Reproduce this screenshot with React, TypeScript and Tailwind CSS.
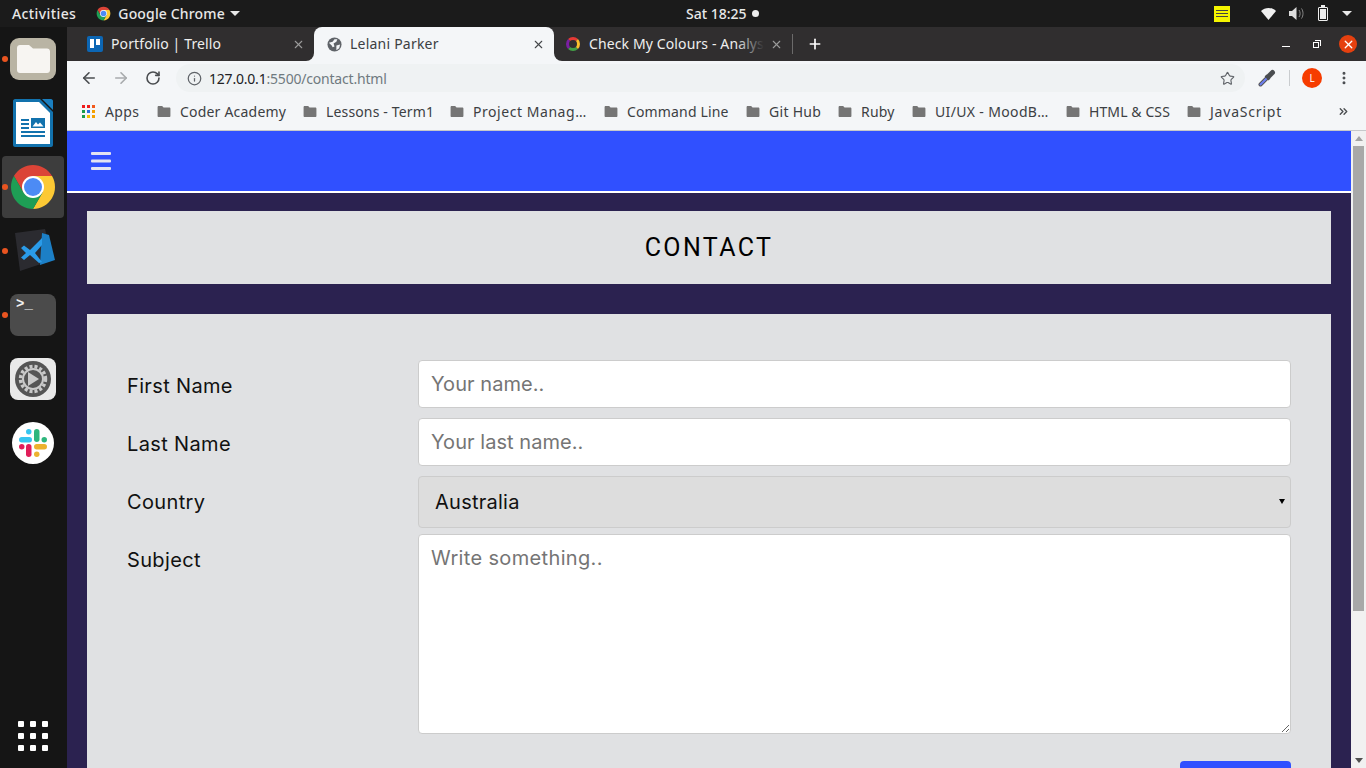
import { ArrowLeft, ArrowRight, Info, RotateCw, Star, Plus, X, MoreVertical, ChevronsRight } from 'lucide-react'

const bookmarks = [
  { label: 'Coder Academy', cls: 'w-[146px] tracking-[0.2px]' },
  { label: 'Lessons - Term1', cls: 'w-[147px] tracking-[0.15px]' },
  { label: 'Project Manag…', cls: 'w-[154px] tracking-[0.55px]' },
  { label: 'Command Line', cls: 'w-[142px] tracking-[0.15px]' },
  { label: 'Git Hub', cls: 'w-[92px] tracking-[0.3px]' },
  { label: 'Ruby', cls: 'w-[74px] tracking-[0.2px]' },
  { label: 'UI/UX - MoodB…', cls: 'w-[154px] tracking-[0.35px]' },
  { label: 'HTML & CSS', cls: 'w-[121px] tracking-[0.1px]' },
  { label: 'JavaScript', cls: 'w-[120px] tracking-[0.8px]' },
]

function ChromeLogo({ size }: { size: number }) {
  return (
    <svg width={size} height={size} viewBox="0 0 48 48">
      <path d="M24 13H43.05A22 22 0 0 0 4.95 13L14.47 29.5Z" fill="#db4437" />
      <path d="M43.05 13A22 22 0 0 1 24 46L33.53 29.5L24 13Z" fill="#fcc934" />
      <path d="M24 46A22 22 0 0 1 4.95 13L14.47 29.5L33.53 29.5Z" fill="#1e9e55" />
      <circle cx="24" cy="24" r="11" fill="#fff" />
      <circle cx="24" cy="24" r="9" fill="#4c8bf5" />
    </svg>
  )
}

function Folder() {
  return (
    <svg width="14" height="11" viewBox="0 0 14 12" className="shrink-0">
      <path d="M0 1.2C0 .5.5 0 1.2 0H5l1.5 1.6h6.3c.7 0 1.2.5 1.2 1.2v8c0 .7-.5 1.2-1.2 1.2H1.2C.5 12 0 11.500 0 10.800Z" fill="#757575" />
    </svg>
  )
}

function DockItem({ children, running, active }: { children: React.ReactNode; running?: boolean; active?: boolean }) {
  return (
    <div className="relative h-16 flex items-center justify-center pr-[1px]">
      {active && <div className="absolute left-[2px] top-[1px] w-[62px] h-[62px] rounded-[4px] bg-[#3d3d3d]" />}
      {running && <div className="absolute left-[2px] top-[29px] w-[6px] h-[6px] rounded-full bg-[#e95420]" />}
      <div className="relative">{children}</div>
    </div>
  )
}

function Dock() {
  return (
    <aside className="w-[67px] shrink-0 bg-[#151515] flex flex-col">
      <DockItem running>
        <div className="w-[46px] h-[42px] rounded-[9px] bg-[#b9b4a4] flex items-center justify-center">
          <svg width="33" height="28" viewBox="0 0 33 28">
            <path d="M0 3C0 1.300 1.300 0 3 0H12L16 3.500H30C31.700 3.500 33 4.800 33 6.500V25C33 26.700 31.700 28 30 28H3C1.300 28 0 26.700 0 25Z" fill="#f7f5f2" />
          </svg>
        </div>
      </DockItem>
      <DockItem>
        <svg width="40" height="48" viewBox="0 0 40 48">
          <path d="M2 0H27L40 13V46C40 47 39 48 38 48H2C1 48 0 47 0 46V2C0 1 1 0 2 0Z" fill="#1272ad" />
          <path d="M3 3H26L37 14V45H3Z" fill="#fff" />
          <path d="M29 0H38C39 0 40 1 40 2V11Z" fill="#1a7fc0" />
          <path d="M8 20H16V22H8ZM8 24H16V26H8ZM8 28H16V30H8ZM8 32H32V34H8ZM8 36H32V38H8Z" fill="#1272ad" />
          <path d="M18 19H32V29H18Z" fill="#1272ad" />
          <path d="M19.500 27.500L23 23L25 25.500L27 23.500L30.500 27.500Z" fill="#fff" />
        </svg>
      </DockItem>
      <DockItem running active>
        <ChromeLogo size={48} />
      </DockItem>
      <DockItem running>
        <svg width="44" height="44" viewBox="0 0 44 44">
          <path d="M4 4L34 0L42 31L9 42Z" fill="#2b2b30" />
          <path d="M31 4L38 6L44 31L29 36Z" fill="#1c7fc6" />
          <path d="M10 19L13 16.500L19 21L31 9V16L24 24L31 33L28 34L19 26L13 31L10 28.500L15 24Z" fill="#2a9be8" />
        </svg>
      </DockItem>
      <DockItem running>
        <div className="w-[46px] h-[42px] rounded-[8px] bg-[#4b4b4b] px-[6px] py-[3px] text-[#f2f2f2] text-[14px] leading-[15px] font-bold font-['Liberation_Mono',monospace]">
          &gt;_
        </div>
      </DockItem>
      <DockItem>
        <div className="w-[46px] h-[42px] rounded-[8px] bg-[#e9e9e9] flex items-center justify-center">
          <svg width="36" height="36" viewBox="0 0 36 36">
            <circle cx="18" cy="18" r="18" fill="#555" />
            <circle cx="18" cy="18" r="12.500" fill="none" stroke="#c9c9c9" strokeWidth="3.500" strokeDasharray="3 2" />
            <circle cx="18" cy="18" r="10" fill="none" stroke="#c9c9c9" strokeWidth="2" />
            <circle cx="18" cy="18" r="7.500" fill="#555" />
            <path d="M13 11L24 18L13 25Z" fill="#c9c9c9" />
          </svg>
        </div>
      </DockItem>
      <DockItem>
        <div className="w-[42px] h-[42px] rounded-full bg-white flex items-center justify-center">
          <svg width="28" height="28" viewBox="0 0 28 28">
            <rect x="0" y="8" width="13" height="5.500" rx="2.750" fill="#36c5f0" />
            <rect x="7" y="0" width="5.500" height="5.500" rx="2.750" fill="#36c5f0" />
            <rect x="15" y="0" width="5.500" height="13" rx="2.750" fill="#2eb67d" />
            <rect x="22.500" y="8" width="5.500" height="5.500" rx="2.750" fill="#2eb67d" />
            <rect x="15" y="15" width="13" height="5.500" rx="2.750" fill="#ecb22e" />
            <rect x="15" y="22.500" width="5.500" height="5.500" rx="2.750" fill="#ecb22e" />
            <rect x="7" y="15" width="5.500" height="13" rx="2.750" fill="#e01e5a" />
            <rect x="0" y="15" width="5.500" height="5.500" rx="2.750" fill="#e01e5a" />
          </svg>
        </div>
      </DockItem>
      <div className="mt-auto mb-[17px] ml-[18px] grid grid-cols-3 gap-[6px] w-[30px]">
        {Array.from({ length: 9 }).map((_, i) => (
          <div key={i} className="w-[6px] h-[6px] rounded-[1px] bg-white" />
        ))}
      </div>
    </aside>
  )
}

function TopBar() {
  return (
    <header className="h-[27px] shrink-0 bg-[#1b1b1b] flex items-center text-[#e8e8e8] text-[14px] font-medium relative">
      <span className="ml-3 tracking-[0.4px]">Activities</span>
      <span className="ml-[20px]"><ChromeLogo size={15} /></span>
      <span className="ml-[7px] tracking-[0.15px]">Google Chrome</span>
      <span className="ml-[5px] w-0 h-0 border-x-[5px] border-x-transparent border-t-[5px] border-t-[#e8e8e8]" />
      <div className="absolute left-[686px] flex items-center">
        <span>Sat 18:25</span>
        <span className="ml-[5px] w-[7px] h-[7px] rounded-full bg-[#eee]" />
      </div>
      <div className="ml-auto flex items-center mr-[14px]">
        <div className="w-[16px] h-[16px] bg-[#f5f500] flex flex-col justify-center gap-[2px] px-[2px]">
          <div className="h-[1px] bg-[#444]" />
          <div className="h-[1px] bg-[#444]" />
          <div className="h-[1px] bg-[#444]" />
        </div>
        <svg className="ml-[31px]" width="15" height="12" viewBox="0 0 15 12"><path d="M0 3C4 -1 11 -1 15 3L7.500 12Z" fill="#f0f0f0" /></svg>
        <svg className="ml-[13px]" width="15" height="13" viewBox="0 0 15 13"><path d="M0 4H3L7.500 0V13L3 9H0Z" fill="#ddd" /><path d="M10 3C11.500 5 11.500 8 10 10M12.500 1.500C14.500 4.500 14.500 8.500 12.500 11.500" stroke="#888" fill="none" /></svg>
        <div className="ml-[14px] relative w-[10px] h-[14px] border border-[#eee] rounded-[1px] flex p-[1px]">
          <div className="flex-1 bg-[#eee]" />
          <div className="absolute -top-[3px] left-[2px] w-[4px] h-[2px] bg-[#eee]" />
        </div>
        <span className="ml-[14px] w-0 h-0 border-x-[5px] border-x-transparent border-t-[5px] border-t-[#e8e8e8]" />
      </div>
    </header>
  )
}

function TabStrip() {
  return (
    <div className="h-[34px] shrink-0 bg-[#302e2f] flex items-stretch text-[14px]">
      <div className="w-[247px] flex items-center pl-[20px] text-[#eeeeee]">
        <div className="w-4 h-4 rounded-[2px] bg-[#0c66b4] flex gap-[2px] p-[3px] shrink-0">
          <div className="w-[4px] h-[9px] bg-white" />
          <div className="w-[4px] h-[6px] bg-white" />
        </div>
        <span className="ml-[8px] mb-[2px] tracking-[0.12px]">Portfolio | Trello</span>
        <X size={13} className="ml-auto mr-[9px] text-[#9b9b9b]" />
      </div>
      <div className="relative w-[240px] bg-[#f4f6f8] rounded-t-[8px] flex items-center pl-[13px] text-[#3c4043]">
        <div className="absolute -left-[8px] bottom-0 w-[8px] h-[8px] bg-[#f4f6f8]"><div className="w-full h-full rounded-br-[8px] bg-[#302e2f]" /></div>
        <div className="absolute -right-[8px] bottom-0 w-[8px] h-[8px] bg-[#f4f6f8]"><div className="w-full h-full rounded-bl-[8px] bg-[#302e2f]" /></div>
        <svg width="15" height="15" viewBox="0 0 16 16" className="shrink-0">
          <circle cx="8" cy="8" r="7.500" fill="#5f6368" />
          <path d="M2 6L6 5L8 2.500L11 2.500L10 5L7 7L8 10L6 11L5 9ZM10 9L14 8L13 12L10 14Z" fill="#f4f6f8" />
        </svg>
        <span className="ml-[8px] mb-[2px] tracking-[0.22px]">Lelani Parker</span>
        <X size={13} className="ml-auto mr-[9px] text-[#44474a]" />
      </div>
      <div className="w-[238px] flex items-center pl-[12px] text-[#eeeeee]">
        <div className="w-[14px] h-[14px] rounded-full border-[3px] border-t-[#e53935] border-r-[#fbc02d] border-b-[#43a047] border-l-[#7b1fa2] shrink-0" />
        <div className="relative ml-[9px] mb-[2px] w-[175px] whitespace-nowrap tracking-[0.12px]">
          Check My Colours - Analys
          <div className="absolute right-0 top-0 h-full w-[28px] bg-gradient-to-r from-transparent to-[#302e2f]" />
        </div>
        <X size={13} className="ml-[6px] text-[#9b9b9b]" />
      </div>
      <div className="w-[1px] h-5 self-center bg-[#6b6a6a]" />
      <Plus size={16} strokeWidth={2.5} className="self-center ml-[14px] text-white" />
      <div className="ml-auto flex items-center mr-[9px]">
        <div className="w-[8px] h-[1px] mt-[4px] bg-white mr-[23px]" />
        <div className="relative w-[6px] h-[6px] mt-[2px] border border-white mr-[20px]">
          <div className="absolute -top-[3px] left-[1px] w-[6px] h-[6px] border-t border-r border-white" />
        </div>
        <div className="w-[18px] h-[18px] rounded-full bg-[#e5400f] flex items-center justify-center">
          <X size={13} strokeWidth={2.5} className="text-white" />
        </div>
      </div>
    </div>
  )
}

function Toolbar() {
  return (
    <div className="h-[34px] shrink-0 bg-[#f4f6f8] flex items-center pl-[13px] pr-[14px]">
      <ArrowLeft size={18} strokeWidth={2.2} className="text-[#4a4d50]" />
      <ArrowRight size={18} strokeWidth={2.2} className="ml-[14px] text-[#a8abad]" />
      <RotateCw size={16} strokeWidth={2.4} className="ml-[15px] text-[#4a4d50]" />
      <div className="ml-[15px] w-[1070px] h-[28px] rounded-full bg-[#eff2f3] flex items-center pl-[11px] pr-[10px]">
        <Info size={15} className="text-[#5f6368]" />
        <span className="ml-[7px] text-[14px] tracking-[-0.2px] text-[#202124]">127.0.0.1<span className="text-[#6f7a80]">:5500/contact.html</span></span>
        <Star size={15} strokeWidth={1.8} className="ml-auto text-[#5f6368]" />
      </div>
      <svg className="ml-[13px]" width="18" height="18" viewBox="0 0 18 18">
        <path d="M2.500 15.500L9.500 8.500" stroke="#555" strokeWidth="4" strokeLinecap="round" />
        <path d="M2.500 15.500L9.500 8.500" stroke="#6d7ff0" strokeWidth="2" strokeLinecap="round" />
        <path d="M7.500 6.500L11.500 10.500" stroke="#4a4d50" strokeWidth="2.500" />
        <path d="M10.500 7.500L14.500 3.500" stroke="#4a4d50" strokeWidth="5" strokeLinecap="round" />
      </svg>
      <div className="ml-[13px] w-[1px] h-4 bg-[#c9cccf]" />
      <div className="ml-[12px] w-5 h-5 rounded-full bg-[#f63c00] text-white text-[10px] flex items-center justify-center">L</div>
      <MoreVertical size={16} strokeWidth={2.5} className="ml-[14px] text-[#4a4d50]" />
    </div>
  )
}

function Bookmarks() {
  return (
    <div className="h-[36px] shrink-0 bg-[#f4f6f8] border-b border-[#c6c8ca] flex items-center pl-[15px] pb-[2px] text-[14px] text-[#3c4043] whitespace-nowrap">
      <div className="w-[75px] flex items-center">
        <div className="grid grid-cols-3 gap-[2px] w-[13px] shrink-0">
          {['bg-[#ef1c1c]', 'bg-[#ef1c1c]', 'bg-[#f25a1c]', 'bg-[#1a9c4c]', 'bg-[#2a6fe0]', 'bg-[#f4a000]', 'bg-[#1a9c4c]', 'bg-[#f4c000]', 'bg-[#f4a000]'].map((c, i) => (
            <div key={i} className={`h-[3px] ${c}`} />
          ))}
        </div>
        <span className="ml-[10px] tracking-[0.4px]">Apps</span>
      </div>
      {bookmarks.map(b => (
        <div key={b.label} className={`flex items-center gap-[9px] ${b.cls}`}>
          <Folder />
          <span>{b.label}</span>
        </div>
      ))}
      <ChevronsRight size={13} strokeWidth={2.5} className="ml-auto mr-[16px] text-[#4a4d50]" />
    </div>
  )
}

function Scrollbar() {
  return (
    <div className="w-[15px] shrink-0 bg-[#f1f1f1] flex flex-col items-center">
      <div className="mt-[5px] w-0 h-0 border-x-[4px] border-x-transparent border-b-[5px] border-b-[#a3a3a3]" />
      <div className="mt-[5px] w-[11px] h-[465px] bg-[#a8a8a8]" />
      <div className="mt-auto mb-[5px] w-0 h-0 border-x-[4px] border-x-transparent border-t-[5px] border-t-[#505050]" />
    </div>
  )
}

function ContactForm() {
  const labelCls = "w-[291px] shrink-0 text-[20px] leading-[24px] tracking-[0.35px] text-[#111] font-['Inter',sans-serif] pt-[14px]"
  const fieldCls = "flex-1 bg-white border border-[#ccc] rounded-[4px] px-3 text-[20px] font-['Inter',sans-serif] placeholder:text-[#757575]"
  return (
    <section className="bg-[#e0e1e3] px-10 pt-[46px] pb-10">
      <div className="flex mb-[10px]">
        <label className={labelCls}>First Name</label>
        <input className={`${fieldCls} h-[48px] tracking-[0.05px]`} placeholder="Your name.." />
      </div>
      <div className="flex mb-[10px]">
        <label className={labelCls}>Last Name</label>
        <input className={`${fieldCls} h-[48px] tracking-[0.05px]`} placeholder="Your last name.." />
      </div>
      <div className="flex mb-[6px]">
        <label className={labelCls}>Country</label>
        <div className="relative flex-1">
          <select className="w-full h-[52px] appearance-none bg-[#dddddd] border border-[#ccc] rounded-[4px] pl-4 text-[20px] tracking-[0.25px] text-[#111] font-['Inter',sans-serif]">
            <option>Australia</option>
          </select>
          <div className="absolute right-[6px] top-[23px] w-0 h-0 border-x-[3px] border-x-transparent border-t-[5px] border-t-black" />
        </div>
      </div>
      <div className="flex">
        <label className={labelCls}>Subject</label>
        <textarea className={`${fieldCls} h-[200px] pt-[8px] tracking-[0.35px]`} placeholder="Write something.." />
      </div>
      <div className="flex justify-end mt-[27px]">
        <button aria-label="Submit" className="w-[111px] h-[45px] rounded-[4px] bg-[#3050ff]" />
      </div>
    </section>
  )
}

export default function App() {
  return (
    <div className="h-[768px] overflow-hidden flex flex-col bg-[#151515] font-['Noto_Sans',sans-serif]">
      <TopBar />
      <div className="flex-1 min-h-0 flex">
        <Dock />
        <div className="flex-1 min-w-0 flex flex-col">
          <TabStrip />
          <Toolbar />
          <Bookmarks />
          <div className="flex-1 min-h-0 flex">
            <main className="flex-1 min-w-0 overflow-hidden bg-[#2b2250]">
              <nav className="h-[62px] bg-[#3050ff] border-b-2 border-white flex items-center pl-6">
                <svg width="20" height="18" viewBox="0 0 20 18">
                  <rect y="0" width="20" height="3" rx="1" fill="#e3e3f2" />
                  <rect y="7.500" width="20" height="3" rx="1" fill="#e3e3f2" />
                  <rect y="15" width="20" height="3" rx="1" fill="#e3e3f2" />
                </svg>
              </nav>
              <div className="px-5 pt-[18px]">
                <div className="h-[73px] mb-[30px] bg-[#e0e1e3] flex items-center justify-center font-['Roboto',sans-serif] text-[25px] tracking-[2.4px] text-black">
                  CONTACT
                </div>
                <ContactForm />
              </div>
            </main>
            <Scrollbar />
          </div>
        </div>
      </div>
    </div>
  )
}
